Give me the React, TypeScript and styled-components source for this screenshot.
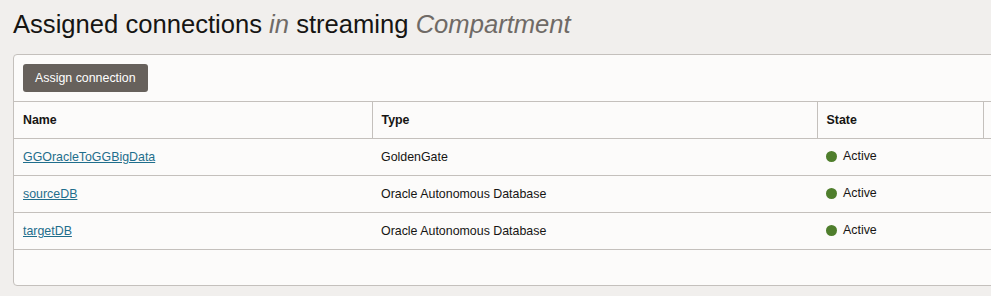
import React from 'react';
import styled, { createGlobalStyle } from 'styled-components';

const GlobalStyle = createGlobalStyle`
  html, body {
    margin: 0;
    padding: 0;
    background: #f1efed;
    overflow: hidden;
  }
  body {
    font-family: "Liberation Sans", Arial, sans-serif;
    color: #161513;
  }
`;

type Connection = {
  name: string;
  type: string;
  state: string;
};

const connections: Connection[] = [
  { name: 'GGOracleToGGBigData', type: 'GoldenGate', state: 'Active' },
  { name: 'sourceDB', type: 'Oracle Autonomous Database', state: 'Active' },
  { name: 'targetDB', type: 'Oracle Autonomous Database', state: 'Active' },
];

const Page = styled.div`
  padding: 8px 0 0 13px;
  width: 1100px;
`;

const Title = styled.h1`
  margin: 0;
  font-size: 25.6px;
  font-weight: 400;
  line-height: 32px;
  color: #161513;
`;

const Muted = styled.em`
  color: #6f6a66;
  font-style: italic;
`;

const Panel = styled.section`
  margin-top: 14px;
  width: 1000px;
  height: 232px;
  background: #fcfbfa;
  border: 1px solid #c4c0bc;
  border-radius: 4px;
  box-sizing: border-box;
`;

const Toolbar = styled.div`
  display: flex;
  padding: 9px;
`;

const Button = styled.button`
  height: 28px;
  padding: 0 12px;
  border: none;
  border-radius: 3px;
  background: #67615c;
  color: #ffffff;
  font-family: "Liberation Sans", Arial, sans-serif;
  font-size: 12.4px;
`;

const Table = styled.table`
  width: 100%;
  border-collapse: collapse;
  table-layout: fixed;
  font-size: 12.4px;
`;

const Col = styled.col<{ $w: number }>`
  width: ${p => p.$w}px;
`;

const Th = styled.th<{ $last?: boolean }>`
  height: 37px;
  box-sizing: border-box;
  padding: 0 9px;
  text-align: left;
  font-weight: 700;
  border-top: 1px solid #c4c0bc;
  border-bottom: 1px solid #c4c0bc;
  border-right: ${p => (p.$last ? 'none' : '1px solid #c4c0bc')};
`;

const Td = styled.td`
  height: 37px;
  box-sizing: border-box;
  padding: 0 9px;
  border-bottom: 1px solid #c4c0bc;
  color: #161513;
`;

const Link = styled.a`
  color: #1f6e8c;
  text-decoration: underline;
  cursor: pointer;
`;

const Status = styled.span`
  display: inline-flex;
  align-items: center;
  gap: 6px;
`;

const Dot = styled.span`
  width: 11px;
  height: 11px;
  border-radius: 50%;
  background: #4f7e2c;
`;

export default function App() {
  return (
    <>
      <GlobalStyle />
      <Page>
        <Title>
          Assigned connections <Muted>in</Muted> streaming <Muted>Compartment</Muted>
        </Title>
        <Panel>
          <Toolbar>
            <Button>Assign connection</Button>
          </Toolbar>
          <Table>
            <colgroup>
              <Col $w={358} />
              <Col $w={445} />
              <Col $w={166} />
              <Col $w={29} />
            </colgroup>
            <thead>
              <tr>
                <Th>Name</Th>
                <Th>Type</Th>
                <Th>State</Th>
                <Th $last />
              </tr>
            </thead>
            <tbody>
              {connections.map(c => (
                <tr key={c.name}>
                  <Td><Link>{c.name}</Link></Td>
                  <Td>{c.type}</Td>
                  <Td>
                    <Status><Dot />{c.state}</Status>
                  </Td>
                  <Td />
                </tr>
              ))}
            </tbody>
          </Table>
        </Panel>
      </Page>
    </>
  );
}
